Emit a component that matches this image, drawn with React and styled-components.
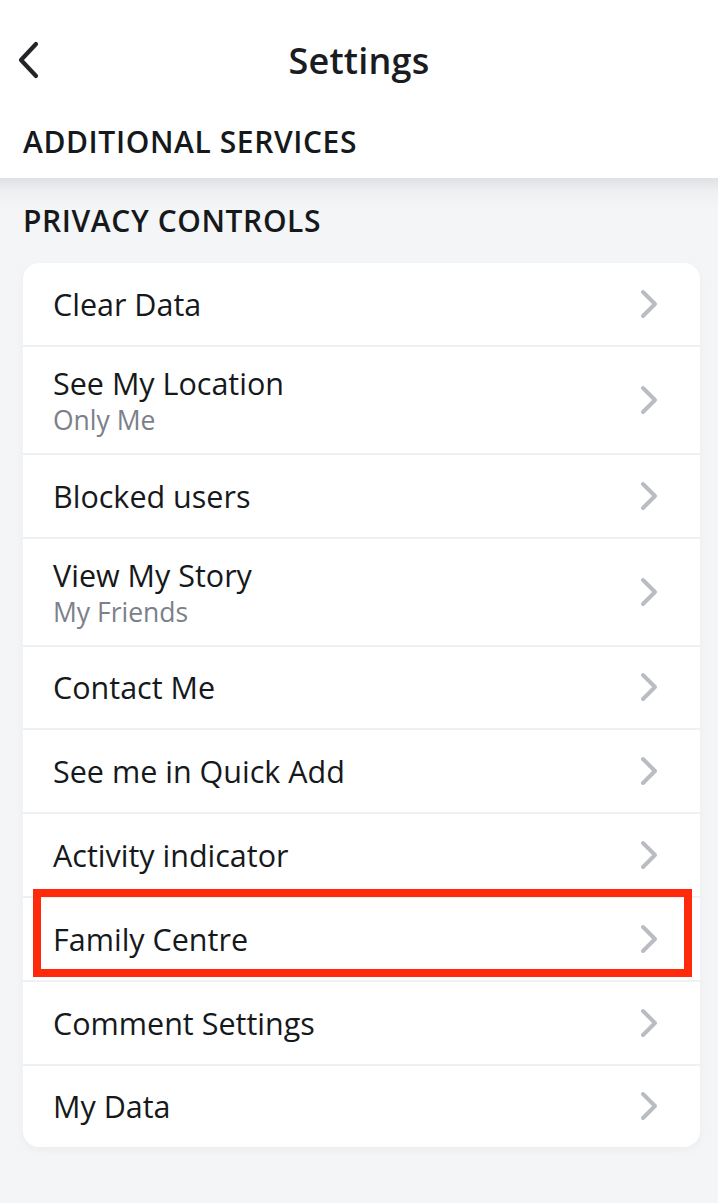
import React from "react";
import styled, { createGlobalStyle } from "styled-components";

const Global = createGlobalStyle`
  html, body { margin: 0; padding: 0; background: #f4f5f7; }
  body { font-family: "Open Sans", Lato, sans-serif; color: #16191c; }
`;

const Page = styled.div`
  width: 718px;
  min-height: 1203px;
  background: #f4f5f7;
`;

const Header = styled.header`
  background: #ffffff;
  padding: 0 23px;
  height: 178px;
  display: flex;
  flex-direction: column;
`;

const TopBar = styled.div`
  position: relative;
  height: 120px;
  display: flex;
  align-items: center;
  justify-content: center;
`;

const BackButton = styled.button`
  position: absolute;
  left: -10px;
  top: 40px;
  width: 32px;
  height: 40px;
  border: 0;
  background: none;
  padding: 0;
  display: flex;
  align-items: center;
  justify-content: center;
`;

const Title = styled.h1`
  margin: 0;
  font-size: 36px;
  font-weight: 600;
  letter-spacing: 0.2px;
  color: #1a1c1f;
`;

const SectionTitle = styled.h2`
  margin: 0;
  font-size: 30px;
  font-weight: 600;
  letter-spacing: 0.6px;
  color: #16191c;
  line-height: 44px;
`;

const Body = styled.main`
  background: linear-gradient(#dfe1e4 0px, #eff0f2 14px, #f4f5f7 30px);
  padding: 21px 18px 40px 23px;
  display: flex;
  flex-direction: column;
  gap: 20px;
`;

const Card = styled.div`
  background: #ffffff;
  border-radius: 16px;
  box-shadow: 0 3px 10px rgba(0, 0, 0, 0.04);
  display: flex;
  flex-direction: column;
`;

const Row = styled.div`
  position: relative;
  display: flex;
  align-items: center;
  justify-content: space-between;
  height: ${(p) => (p.$tall ? 106 : 81.8)}px;
  padding: 0 40px 0 30px;
  border-top: ${(p) => (p.$first ? "0" : "2px solid #eef0f2")};
  box-sizing: content-box;
`;

const Labels = styled.div`
  display: flex;
  flex-direction: column;
  gap: 2px;
`;

const Label = styled.span`
  font-size: 30.5px;
  font-weight: 400;
  color: #16191c;
  line-height: 38px;
`;

const Sub = styled.span`
  font-size: 26.5px;
  color: #7b8089;
  line-height: 32px;
`;

const Highlight = styled.div`
  position: absolute;
  left: 10px;
  right: 8px;
  top: -9px;
  bottom: 3px;
  border: 8px solid #ff2a0c;
  pointer-events: none;
`;

const Chevron = () => (
  <svg width="22" height="32" viewBox="0 0 22 32">
    <path d="M5 4 L17 16 L5 28" fill="none" stroke="#b9bdc3" strokeWidth="4" strokeLinecap="round" strokeLinejoin="round" />
  </svg>
);

const items = [
  { label: "Clear Data" },
  { label: "See My Location", sub: "Only Me" },
  { label: "Blocked users" },
  { label: "View My Story", sub: "My Friends" },
  { label: "Contact Me" },
  { label: "See me in Quick Add" },
  { label: "Activity indicator" },
  { label: "Family Centre", highlight: true },
  { label: "Comment Settings" },
  { label: "My Data" },
];

export default function App() {
  return (
    <Page>
      <Global />
      <Header>
        <TopBar>
          <BackButton aria-label="Back">
            <svg width="26" height="40" viewBox="0 0 26 40">
              <path d="M20 4 L5 20 L20 36" fill="none" stroke="#222428" strokeWidth="4.2" strokeLinecap="round" strokeLinejoin="round" />
            </svg>
          </BackButton>
          <Title>Settings</Title>
        </TopBar>
        <SectionTitle>ADDITIONAL SERVICES</SectionTitle>
      </Header>
      <Body>
        <SectionTitle>PRIVACY CONTROLS</SectionTitle>
        <Card>
          {items.map((it, i) => (
            <Row key={it.label} $first={i === 0} $tall={!!it.sub}>
              <Labels>
                <Label>{it.label}</Label>
                {it.sub && <Sub>{it.sub}</Sub>}
              </Labels>
              <Chevron />
              {it.highlight && <Highlight />}
            </Row>
          ))}
        </Card>
      </Body>
    </Page>
  );
}
